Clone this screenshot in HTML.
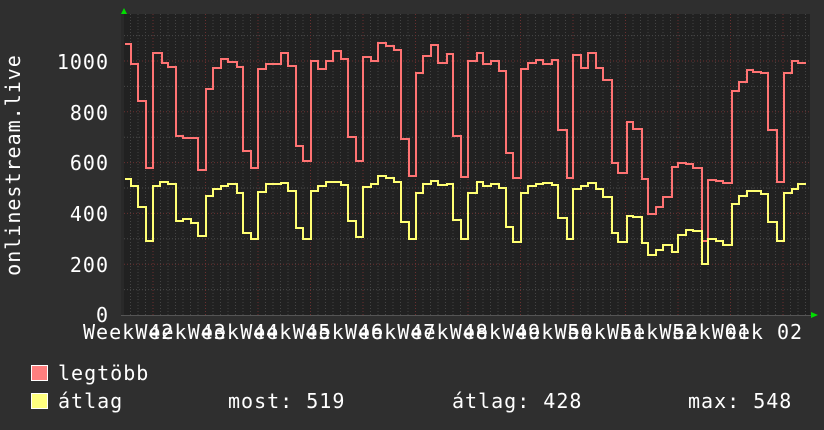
<!DOCTYPE html>
<html><head><meta charset="utf-8"><style>
html,body{margin:0;padding:0;background:#2f2f2f;width:824px;height:430px;overflow:hidden}
svg{display:block}
text{font-family:"DejaVu Sans Mono","Liberation Mono",monospace;fill:#fff;font-size:20px;letter-spacing:1px}
</style></head><body>
<svg width="824" height="430" viewBox="0 0 824 430" xmlns="http://www.w3.org/2000/svg">
<rect x="0" y="0" width="824" height="430" fill="#2f2f2f"/>
<rect x="124" y="14" width="686" height="301" fill="#212121"/>
<rect x="121" y="14" width="3" height="301" fill="#292929"/>
<g id="grid"></g>
<path id="red" fill="none" stroke="#ff7373" stroke-width="2"/>
<path id="yel" fill="none" stroke="#ffff73" stroke-width="2"/>
<polygon points="121,14 124,8 127,14" fill="#00dd00"/>
<polygon points="811,312 818,315 811,318" fill="#00dd00"/>
<g text-anchor="end">
<text x="109" y="69">1000</text>
<text x="109" y="120">800</text>
<text x="109" y="170">600</text>
<text x="109" y="221">400</text>
<text x="109" y="272">200</text>
<text x="109" y="322">0</text>
</g>
<text transform="translate(20,165) rotate(-90)" text-anchor="middle">onlinestream.live</text>
<g id="xl"></g>
<rect x="31.5" y="365.5" width="16" height="15" fill="#ff7f7f" stroke="#fff" stroke-width="1"/>
<rect x="31.5" y="393.5" width="16" height="15" fill="#ffff7f" stroke="#fff" stroke-width="1"/>
<text x="58" y="380">legtöbb</text>
<text x="58" y="408">átlag</text>
<text x="228" y="408">most: 519</text>
<text x="452" y="408">átlag: 428</text>
<text x="688" y="408">max: 548</text>
</svg>
<script>
var g=document.getElementById('grid'),s="";
for(var k=1;k<=11;k++){var y=315-25.4*k;s+='<line x1="124" x2="810" y1="'+y+'" y2="'+y+'" stroke="'+(k%2==0?'#6a3030':'#4a4a4a')+'" stroke-dasharray="1,2" stroke-width="1"/>';}
for(var x=153-7.5*3;x<810;x+=7.5){var wk=Math.abs(((x-153)/52.5)-Math.round((x-153)/52.5))<0.01;s+='<line x1="'+x+'" x2="'+x+'" y1="14" y2="315" stroke="'+(wk?'#6a3030':'#444')+'" stroke-dasharray="1,2" stroke-width="1"/>';}
s+='<line x1="121" x2="812" y1="315.5" y2="315.5" stroke="#555" stroke-width="1"/>';
g.innerHTML=s;
function P(a){var d="M125 "+a[0][0];for(var i=0;i<a.length;i++){d+=" H"+a[i][1];if(i+1<a.length)d+=" V"+a[i+1][0];}return d;}
var R=[[44,131],[64,138],[101,146],[168,153],[53,162],[63,168],[67,176],[136,183],[138,198],[170,206],[89,213],[68,221],[59,228],[62,237],[67,243],[151,251],[168,258],[69,266],[64,281],[53,288],[66,296],[146,303],[161,311],[61,318],[69,326],[61,333],[51,341],[59,348],[137,356],[161,363],[57,371],[61,378],[43,386],[46,394],[50,401],[139,409],[176,416],[73,423],[56,431],[45,438],[63,447],[54,453],[136,461],[177,468],[61,477],[53,483],[64,491],[61,499],[71,506],[153,513],[178,521],[69,528],[63,536],[60,543],[64,552],[60,558],[130,567],[178,573],[55,581],[68,588],[53,596],[68,603],[80,612],[163,618],[173,627],[122,633],[129,642],[179,648],[214,656],[207,663],[197,672],[167,678],[163,686],[164,693],[168,702],[241,708],[180,716],[181,723],[183,732],[91,739],[82,747],[70,753],[72,761],[73,768],[130,777],[182,784],[73,792],[61,798],[63,806]];
var Y=[[179,131],[186,138],[207,146],[241,153],[186,160],[182,168],[184,176],[221,183],[219,191],[223,198],[236,206],[196,213],[189,221],[186,228],[184,237],[193,243],[233,251],[239,258],[192,266],[184,281],[183,288],[191,296],[228,303],[239,311],[191,318],[186,326],[182,341],[185,348],[221,356],[237,363],[187,371],[184,378],[176,386],[178,394],[182,401],[222,409],[239,416],[193,423],[184,431],[181,438],[185,447],[184,453],[220,461],[239,468],[193,477],[182,483],[186,491],[184,499],[188,506],[227,513],[242,521],[193,528],[186,536],[184,543],[183,552],[185,558],[218,567],[239,573],[189,581],[186,588],[183,596],[189,603],[197,612],[233,618],[242,627],[216,633],[217,642],[243,648],[255,656],[250,663],[245,672],[252,678],[235,686],[230,693],[231,702],[264,708],[239,716],[241,723],[245,732],[204,739],[196,747],[191,761],[194,768],[222,777],[241,784],[193,792],[189,798],[184,806]];
document.getElementById('red').setAttribute('d',P(R));
document.getElementById('yel').setAttribute('d',P(Y));
var names=["42","43","44","45","46","47","48","49","50","51","52","01","02"],xs="";
for(var i=0;i<13;i++){xs+='<text x="'+(83+52.4*i)+'" y="339">Week '+names[i]+'</text>';}
document.getElementById('xl').innerHTML=xs;
</script>
</body></html>
